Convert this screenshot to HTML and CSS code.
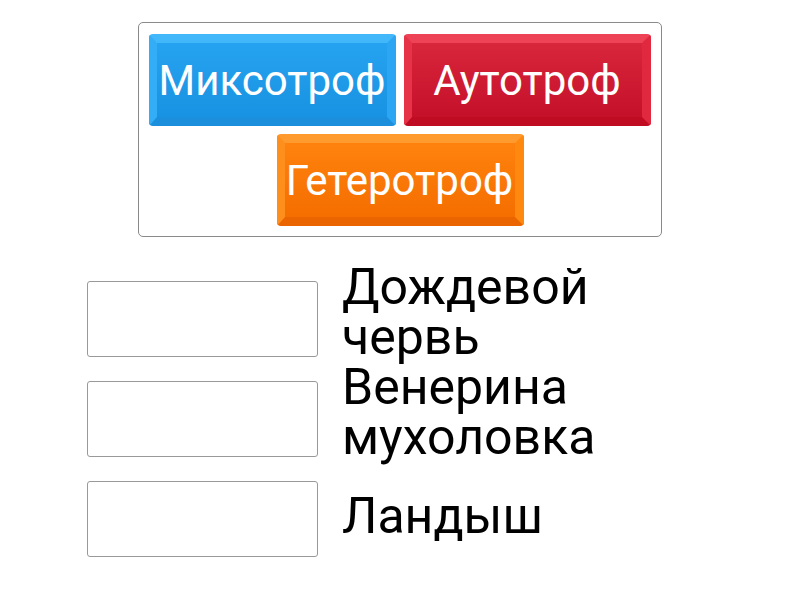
FILE: index.html
```html
<!DOCTYPE html>
<html lang="ru">
<head>
<meta charset="utf-8">
<link rel="stylesheet" href="styles.css">
</head>
<body>
<div class="page">
  <div class="bank">
    <div class="tile blue">Миксотроф</div>
    <div class="tile red">Аутотроф</div>
    <div class="tile orange">Гетеротроф</div>
  </div>
  <div class="rows">
    <div class="row">
      <div class="slot"></div>
      <div class="label two">Дождевой червь</div>
    </div>
    <div class="row">
      <div class="slot"></div>
      <div class="label two">Венерина мухоловка</div>
    </div>
    <div class="row">
      <div class="slot"></div>
      <div class="label">Ландыш</div>
    </div>
  </div>
</div>
</body>
</html>
```
FILE: styles.css
```css
html, body {
  margin: 0;
  padding: 0;
  background: #fff;
}
body {
  width: 800px;
  height: 600px;
  overflow: hidden;
  font-family: Roboto, "Noto Sans", sans-serif;
}
.page {
  display: flex;
  flex-direction: column;
  padding-top: 22px;
}
.bank {
  align-self: center;
  width: 524px;
  box-sizing: border-box;
  border: 1px solid #8a8a8a;
  border-radius: 5px;
  padding: 11px 10px 10px 10px;
  display: flex;
  flex-wrap: wrap;
  justify-content: center;
  gap: 8px;
}
.tile {
  width: 247px;
  height: 92px;
  box-sizing: border-box;
  border-radius: 4px;
  border-style: solid;
  border-width: 9px 9px 9px 8px;
  color: #fff;
  font-size: 42px;
  display: flex;
  align-items: center;
  justify-content: center;
  white-space: nowrap;
}
.blue {
  border-color: #42b8fb #2ca6f2 #1b8fdc #33aef6;
  background: linear-gradient(#26a3f0, #1892e2);
}
.red {
  border-color: #ee4356 #e0293f #bf0c22 #e63347;
  background: linear-gradient(#d8263b, #c5102a);
}
.orange {
  border-color: #ff9a2e #ff880f #ea6400 #ff8f1c;
  background: linear-gradient(#ff820e, #f46e00);
}
.rows {
  margin-top: 44px;
  padding-left: 87px;
  display: flex;
  flex-direction: column;
  gap: 24px;
}
.row {
  height: 76px;
  display: flex;
  align-items: center;
  gap: 24px;
}
.slot {
  width: 231px;
  height: 76px;
  box-sizing: border-box;
  border: 1px solid #999;
  border-radius: 3px;
  flex: none;
}
.label {
  width: 320px;
  flex: none;
  font-size: 50px;
  line-height: 50px;
  color: #000;
  margin-top: -6px;
}
.label.two {
  margin-top: -14px;
}
```
